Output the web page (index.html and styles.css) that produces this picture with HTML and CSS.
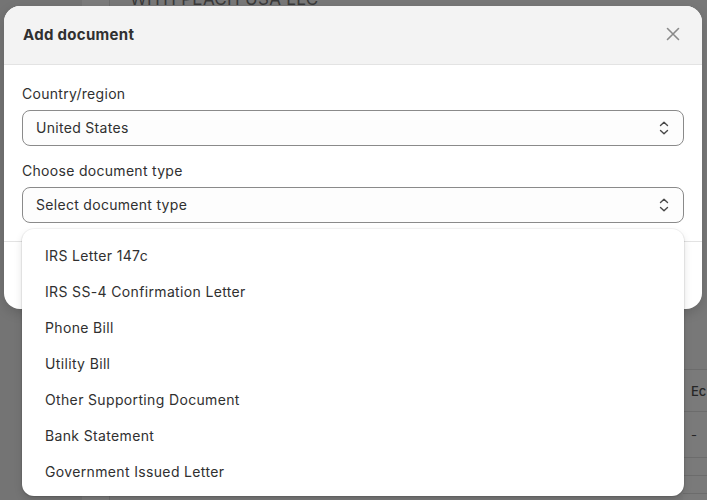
FILE: index.html
```html
<!DOCTYPE html>
<html>
<head>
<meta charset="utf-8">
<link rel="stylesheet" href="styles.css">
</head>
<body>
<div class="page">
  <div class="page-side"></div>
  <div class="page-strip"></div>
  <div class="page-main">
    <div class="page-title">WITH PEACH USA LLC</div>
  </div>
  <div class="page-table">
    <div class="tcell th">Ec</div>
    <div class="tcell td">-</div>
    <div class="tcell tsm"></div>
    <div class="tcell tsm"></div>
  </div>
</div>

<div class="modal">
  <div class="modal-header">
    <h2 class="modal-title">Add document</h2>
    <button class="close" aria-label="Close">
      <svg width="14" height="14" viewBox="0 0 14 14"><path d="M1.5 1.5 L12.5 12.5 M12.5 1.5 L1.5 12.5" stroke="#8a8a8a" stroke-width="1.6" stroke-linecap="round" fill="none"/></svg>
    </button>
  </div>
  <div class="modal-body">
    <label class="label">Country/region</label>
    <div class="select">
      <span>United States</span>
      <svg class="chev" width="12" height="16" viewBox="0 0 12 16"><path d="M2.5 5.5 L6 2.2 L9.5 5.5 M2.5 10.5 L6 13.8 L9.5 10.5" stroke="#4a4a4a" stroke-width="1.4" stroke-linecap="round" stroke-linejoin="round" fill="none"/></svg>
    </div>
    <label class="label label2">Choose document type</label>
    <div class="select">
      <span>Select document type</span>
      <svg class="chev" width="12" height="16" viewBox="0 0 12 16"><path d="M2.5 5.5 L6 2.2 L9.5 5.5 M2.5 10.5 L6 13.8 L9.5 10.5" stroke="#4a4a4a" stroke-width="1.4" stroke-linecap="round" stroke-linejoin="round" fill="none"/></svg>
    </div>
  </div>
  <div class="modal-footer"></div>
</div>

<ul class="dropdown">
  <li>IRS Letter 147c</li>
  <li>IRS SS-4 Confirmation Letter</li>
  <li>Phone Bill</li>
  <li>Utility Bill</li>
  <li>Other Supporting Document</li>
  <li>Bank Statement</li>
  <li>Government Issued Letter</li>
</ul>
</body>
</html>
```
FILE: styles.css
```css
* { box-sizing: border-box; }
html, body {
  margin: 0;
  padding: 0;
  width: 707px;
  height: 500px;
  overflow: hidden;
  font-family: Inter, "Noto Sans", sans-serif;
  color: #303030;
}
body {
  background: #787878;
  position: relative;
}
.page {
  display: flex;
  height: 500px;
}
.page-side {
  width: 82px;
  background: #747474;
}
.page-strip {
  width: 28px;
  background: #7c7c7c;
  border-right: 1px solid #6e6e6e;
}
.page-main {
  flex: 1;
  padding-left: 20px;
}
.page-title {
  font-size: 17px;
  color: #3a3a3a;
  margin-top: -11px;
  line-height: 20px;
  letter-spacing: 0.3px;
}
.page-table {
  width: 24px;
  margin-top: 369px;
  display: flex;
  flex-direction: column;
  border-top: 1px solid #6c6c6c;
  background: #7a7a7a;
}
.tcell {
  border-bottom: 1px solid #6c6c6c;
  padding-left: 8px;
  font-size: 13px;
  color: #262626;
  white-space: nowrap;
  overflow: hidden;
}
.th { height: 42px; line-height: 42px; font-weight: 500; }
.td { height: 46px; line-height: 46px; }
.tsm { height: 18px; }

.modal {
  position: absolute;
  left: 4px;
  top: 6px;
  width: 698px;
  height: 303px;
  background: #fff;
  border-radius: 16px;
  overflow: hidden;
  display: flex;
  flex-direction: column;
  box-shadow: 0 4px 12px rgba(0,0,0,0.15);
}
.modal-header {
  height: 59px;
  background: #f3f3f3;
  border-bottom: 1px solid #e3e3e3;
  display: flex;
  align-items: center;
  justify-content: space-between;
  padding: 0 22px 2px 19px;
}
.modal-title {
  margin: 0;
  font-size: 15px;
  font-weight: 650;
  color: #303030;
  letter-spacing: 0.3px;
}
.close {
  border: 0;
  background: none;
  padding: 0;
  width: 14px;
  height: 14px;
  display: flex;
}
.modal-body {
  padding: 19px 18px 18px;
  border-bottom: 1px solid #e3e3e3;
  display: flex;
  flex-direction: column;
}
.label {
  font-size: 14px;
  line-height: 20px;
  color: #303030;
  margin-bottom: 6px;
  letter-spacing: 0.3px;
}
.label2 { margin-top: 15px; }
.select {
  height: 36px;
  border: 1px solid #8a8a8a;
  border-radius: 8px;
  display: flex;
  align-items: center;
  justify-content: space-between;
  padding: 0 13px 1px 13px;
  font-size: 14px;
  color: #303030;
  background: #fdfdfd;
  letter-spacing: 0.3px;
}
.chev { display: block; }
.modal-footer { flex: 1; }

.dropdown {
  position: absolute;
  left: 22px;
  top: 229px;
  width: 662px;
  height: 267px;
  margin: 0;
  padding: 9px 0 6px;
  list-style: none;
  background: #fff;
  border-radius: 12px;
  box-shadow: 0 0 0 1px rgba(0,0,0,0.04), 0 4px 8px rgba(0,0,0,0.12), 0 1px 2px rgba(0,0,0,0.1);
}
.dropdown li {
  height: 36px;
  line-height: 36px;
  padding-left: 23px;
  font-size: 14px;
  color: #303030;
  letter-spacing: 0.35px;
}
```
